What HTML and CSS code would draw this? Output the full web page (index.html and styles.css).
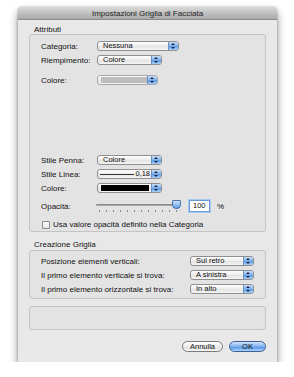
FILE: index.html
```html
<!DOCTYPE html>
<html>
<head>
<meta charset="utf-8">
<link rel="stylesheet" href="styles.css">
</head>
<body>
<div class="window">
  <div class="titlebar">Impostazioni Griglia di Facciata</div>
  <div class="content">
    <div class="legend">Attributi</div>
    <div class="group g1">
      <div class="row r1"><span class="lbl">Categoria:</span><span class="popup w82"><span class="val">Nessuna</span><span class="arr"></span></span></div>
      <div class="row r2"><span class="lbl">Riempimento:</span><span class="popup w65"><span class="val">Colore</span><span class="arr"></span></span></div>
      <div class="row r3"><span class="lbl">Colore:</span><span class="popup w61 dis"><span class="val"><span class="grayswatch"></span></span><span class="arr"></span></span></div>
      <div class="spacer"></div>
      <div class="row"><span class="lbl">Stile Penna:</span><span class="popup w65"><span class="val">Colore</span><span class="arr"></span></span></div>
      <div class="row r5"><span class="lbl">Stile Linea:</span><span class="popup w65"><span class="val line"><span class="stroke"></span><span class="num">0,18</span></span><span class="arr"></span></span></div>
      <div class="row r5"><span class="lbl">Colore:</span><span class="popup w65"><span class="val"><span class="blackswatch"></span></span><span class="arr"></span></span></div>
      <div class="row opac"><span class="lbl">Opacità:</span>
        <span class="slider"><span class="track"></span><span class="thumb"></span>
          <span class="ticks"><i></i><i></i><i></i><i></i><i></i><i></i><i></i><i></i><i></i><i></i><i></i><i></i></span>
        </span>
        <span class="field">100</span><span class="pct">%</span>
      </div>
      <div class="row chk"><span class="cbox"></span><span>Usa valore opacità definito nella Categoria</span></div>
    </div>
    <div class="legend l2">Creazione Griglia</div>
    <div class="group g2">
      <div class="row2"><span>Posizione elementi verticali:</span><span class="popup w64"><span class="val">Sul retro</span><span class="arr"></span></span></div>
      <div class="row2"><span>Il primo elemento verticale si trova:</span><span class="popup w64"><span class="val">A sinistra</span><span class="arr"></span></span></div>
      <div class="row2"><span>Il primo elemento orizzontale si trova:</span><span class="popup w64"><span class="val">In alto</span><span class="arr"></span></span></div>
    </div>
    <div class="group g3"></div>
    <div class="buttons">
      <span class="btn cancel">Annulla</span>
      <span class="btn ok">OK</span>
    </div>
  </div>
</div>
</body>
</html>
```
FILE: styles.css
```css
html, body { margin: 0; padding: 0; background: #fff; }
body { font-family: "Liberation Sans", Arial, sans-serif; font-size: 8px; color: #111; }
.window {
  margin: 7px 0 0 18px;
  width: 259px;
  height: 355px;
  background: #e8e8e8;
  border-radius: 4px 4px 0 0;
  box-shadow: 0 5px 9px rgba(0,0,0,0.45), 0 0 2px rgba(0,0,0,0.35);
  overflow: hidden;
}
.titlebar {
  height: 13px;
  line-height: 13px;
  text-align: center;
  font-size: 8px;
  color: #222;
  background: linear-gradient(#d9d9d9, #a9a9a9);
  border-bottom: 1px solid #8a8a8a;
  box-sizing: border-box;
}
.content { padding: 0 11px 0 11px; display: flex; flex-direction: column; }
.legend { height: 14px; line-height: 10px; padding: 5px 0 0 5px; box-sizing: border-box; }
.l2 { height: 18px; padding-top: 9px; line-height: 8px; }
.group {
  border: 1px solid #c4c4c4;
  border-radius: 3px;
  background: #e3e3e3;
  box-sizing: border-box;
}
.g1 { height: 198px; padding: 6px 0 0 11px; display: flex; flex-direction: column; }
.row { display: flex; align-items: center; height: 10px; }
.r2 { margin-top: 4px; }
.r3 { margin-top: 10px; }
.r5 { margin-top: 4px; }
.spacer { height: 70px; }
.lbl { width: 56px; flex: none; }
.popup {
  display: flex;
  height: 10px;
  box-sizing: border-box;
  border: 1px solid #8f8f8f;
  border-radius: 3px;
  background: linear-gradient(#ffffff, #ececec 50%, #e2e2e2 51%, #f5f5f5);
  overflow: hidden;
}
.w82 { width: 82px; }
.w65 { width: 65px; }
.w61 { width: 61px; }
.w64 { width: 64px; }
.popup .val { flex: 1; padding-left: 5px; line-height: 8px; font-size: 7.5px; display: flex; align-items: center; }
.popup .arr {
  width: 9px; flex: none;
  background: linear-gradient(#c6def8, #7fb2ee 50%, #5a98e6 51%, #a8d0fa);
  border-left: 1px solid #6b8fc0;
  position: relative;
}
.popup .arr::before, .popup .arr::after {
  content: ""; position: absolute; left: 2px;
  border-left: 2px solid transparent; border-right: 2px solid transparent;
}
.popup .arr::before { top: 1px; border-bottom: 2px solid #1a2a44; }
.popup .arr::after { bottom: 1px; border-top: 2px solid #1a2a44; }
.dis { border-color: #a8a8a8; }
.grayswatch { display: block; height: 6px; width: 46px; margin-left: -2px; background: #bdbdbd; }
.blackswatch { display: block; height: 6px; width: 48px; margin-left: -2px; background: #000; }
.val.line { padding-left: 2px; padding-right: 1px; }
.stroke { flex: 1; height: 1px; background: #333; }
.num { margin-left: 1px; }
.opac { margin-top: 7px; height: 12px; }
.slider { position: relative; width: 88px; height: 12px; flex: none; margin-left: -1px; }
.track { position: absolute; left: 0; right: 4px; top: 4px; height: 2px; border-radius: 1px; background: linear-gradient(#7a7a7a, #b8b8b8); }
.thumb {
  position: absolute; left: 76px; top: 0; width: 7px; height: 7px;
  background: linear-gradient(#cfe3fb, #5c9be6);
  border: 1px solid #4d74a8;
  border-radius: 1px 1px 4px 4px;
}
.ticks { position: absolute; left: 3px; top: 10px; width: 78px; display: flex; justify-content: space-between; }
.ticks i { display: block; width: 1px; height: 2px; background: #888; }
.field {
  margin-left: 5px; width: 21px; height: 12px; box-sizing: border-box;
  border: 1px solid #6b98d8; outline: 1px solid #a8c8f0;
  background: #fff; line-height: 10px; padding-left: 3px; font-size: 7.5px;
}
.pct { margin-left: 7px; }
.chk { margin-top: 8px; height: 9px; }
.cbox { width: 6px; height: 6px; border: 1px solid #8a8a8a; background: linear-gradient(#fff, #e4e4e4); margin: 0 3px 0 1px; border-radius: 1px; }
.g2 { height: 49px; padding: 5px 11px 0 11px; display: flex; flex-direction: column; gap: 4px; }
.row2 { display: flex; justify-content: space-between; align-items: center; height: 10px; }
.g3 { height: 24px; margin-top: 7px; }
.buttons { display: flex; justify-content: flex-end; gap: 6px; margin-top: 11px; }
.btn {
  height: 11px; box-sizing: border-box; border-radius: 6px; text-align: center;
  line-height: 9px; font-size: 7.5px;
}
.cancel { width: 41px; border: 1px solid #7a7a7a; background: linear-gradient(#ffffff, #ededed 50%, #dedede 51%, #f6f6f6); }
.ok { width: 37px; border: 1px solid #3d5f96; background: linear-gradient(#d3e6fb, #7fb0ee 50%, #4d8ee4 51%, #a9d3fb); }
```
